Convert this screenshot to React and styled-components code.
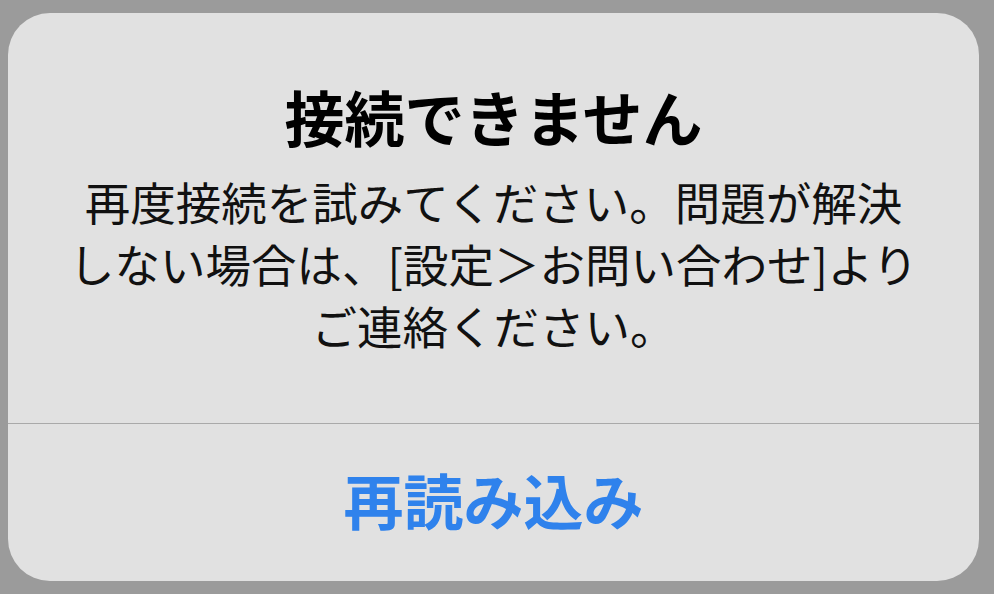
import React from 'react'
import styled, { createGlobalStyle } from 'styled-components'

const GlobalStyle = createGlobalStyle`
  html, body {
    margin: 0;
    padding: 0;
    background: #9b9b9b;
  }
  body {
    font-family: "Noto Sans CJK JP", "Noto Sans", sans-serif;
  }
`

const Backdrop = styled.div`
  width: 994px;
  height: 594px;
  box-sizing: border-box;
  padding: 13px 15px 13px 8px;
  background: #9b9b9b;
`

const Dialog = styled.div`
  height: 100%;
  display: flex;
  flex-direction: column;
  background: #e1e1e1;
  border-radius: 42px;
  overflow: hidden;
`

const Content = styled.div`
  height: 411px;
  box-sizing: border-box;
  padding-top: 68px;
  display: flex;
  flex-direction: column;
  align-items: center;
  border-bottom: 1px solid #a9a9a9;
`

const Title = styled.h1`
  margin: 0;
  font-size: 60px;
  line-height: 70px;
  font-weight: 700;
  color: #000;
`

const Message = styled.p`
  margin: 19px 0 0;
  font-size: 45.5px;
  line-height: 62px;
  font-weight: 400;
  color: #111;
  text-align: center;
`

const ActionButton = styled.button`
  flex: 1;
  border: none;
  background: transparent;
  padding: 0 0 8px 0;
  font-family: inherit;
  font-size: 60px;
  font-weight: 700;
  color: #2f82ec;
  cursor: pointer;
`

const App = () => {
  return (
    <>
      <GlobalStyle />
      <Backdrop>
        <Dialog>
          <Content>
            <Title>接続できません</Title>
            <Message>
              再度接続を試みてください。問題が解決<br />
              しない場合は、[設定＞お問い合わせ]より<br />
              ご連絡ください。
            </Message>
          </Content>
          <ActionButton>再読み込み</ActionButton>
        </Dialog>
      </Backdrop>
    </>
  )
}

export default App
